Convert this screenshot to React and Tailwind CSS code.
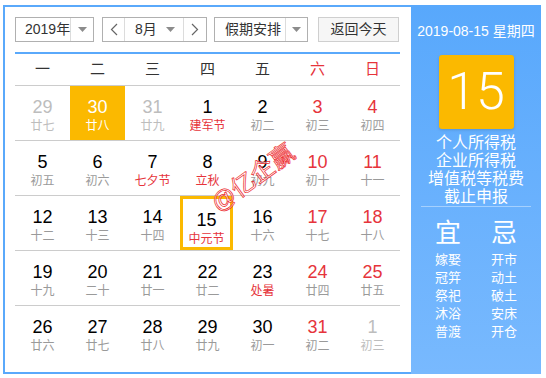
import React from 'react';

const font = { fontFamily: '"Liberation Sans", "Noto Sans CJK SC", sans-serif' };

const weeks = [
  [
    { d: 29, l: '廿七', o: true },
    { d: 30, l: '廿八', o: true, hl: true },
    { d: 31, l: '廿九', o: true },
    { d: 1, l: '建军节', f: true },
    { d: 2, l: '初二' },
    { d: 3, l: '初三', w: true },
    { d: 4, l: '初四', w: true },
  ],
  [
    { d: 5, l: '初五' },
    { d: 6, l: '初六' },
    { d: 7, l: '七夕节', f: true },
    { d: 8, l: '立秋', f: true },
    { d: 9, l: '初九' },
    { d: 10, l: '初十', w: true },
    { d: 11, l: '十一', w: true },
  ],
  [
    { d: 12, l: '十二' },
    { d: 13, l: '十三' },
    { d: 14, l: '十四' },
    { d: 15, l: '中元节', f: true, today: true },
    { d: 16, l: '十六' },
    { d: 17, l: '十七', w: true },
    { d: 18, l: '十八', w: true },
  ],
  [
    { d: 19, l: '十九' },
    { d: 20, l: '二十' },
    { d: 21, l: '廿一' },
    { d: 22, l: '廿二' },
    { d: 23, l: '处暑', f: true },
    { d: 24, l: '廿四', w: true },
    { d: 25, l: '廿五', w: true },
  ],
  [
    { d: 26, l: '廿六' },
    { d: 27, l: '廿七' },
    { d: 28, l: '廿八' },
    { d: 29, l: '廿九' },
    { d: 30, l: '初一' },
    { d: 31, l: '初二', w: true },
    { d: 1, l: '初三', o: true },
  ],
];

const Caret = () => (
  <svg width="9" height="5" viewBox="0 0 9 5">
    <path d="M0 0 H9 L4.5 5 Z" fill="#8c8c8c" />
  </svg>
);

const Chevron = ({ dir }) => (
  <svg width="8" height="13" viewBox="0 0 8 13">
    <polyline
      points={dir === 'l' ? '7,1 1.5,6.5 7,12' : '1,1 6.5,6.5 1,12'}
      fill="none"
      stroke="#666"
      strokeWidth="1.2"
    />
  </svg>
);

const Cell = ({ c }) => {
  let num = 'text-black';
  let lun = 'text-[#9a9a9a]';
  if (c.w) num = 'text-[#e6343b]';
  if (c.f) lun = 'text-[#e6343b]';
  if (c.o) {
    num = 'text-[#bdbdbd]';
    lun = 'text-[#bdbdbd]';
  }
  let box = 'h-[54px] flex flex-col items-center pt-[11px]';
  if (c.hl) {
    box += ' bg-[#fbb900]';
    num = 'text-white';
    lun = 'text-white';
  }
  if (c.today) box += ' border-[3px] border-[#fbb900] pt-[8px] mr-[2px]';
  return (
    <div className={box}>
      <div className={`text-[18px] leading-[20px] ${num}`}>{c.d}</div>
      <div className={`text-[12px] leading-[16px] mt-[1px] ${lun}`}>{c.l}</div>
    </div>
  );
};

export default function App() {
  return (
    <div className="w-[546px] h-[378px] bg-white pt-[5px] pl-[3px]" style={font}>
      <div className="flex h-[369px]">
        <div className="relative w-[408px] border-l-2 border-y-2 border-[#5aa9fb] pl-[10px] pr-[11px] pt-[10px]">
          <div className="flex items-center h-[25px] text-[14px] text-[#333]">
            <div className="flex h-[25px] w-[79px] border border-[#b0b0b0]">
              <div className="w-[55px] pl-[9px] leading-[23px] whitespace-nowrap border-r border-[#dcdcdc]">2019年</div>
              <div className="flex-1 flex items-center justify-center"><Caret /></div>
            </div>
            <div className="flex h-[25px] w-[105px] ml-[8px] border border-[#b0b0b0]">
              <div className="w-[22px] flex items-center justify-center border-r border-[#dcdcdc]"><Chevron dir="l" /></div>
              <div className="w-[59px] flex items-center border-r border-[#dcdcdc]">
                <span className="pl-[10px] leading-[23px]">8月</span>
                <span className="ml-auto mr-[8px] flex"><Caret /></span>
              </div>
              <div className="flex-1 flex items-center justify-center"><Chevron dir="r" /></div>
            </div>
            <div className="flex h-[25px] w-[94px] ml-[7px] border border-[#b0b0b0]">
              <div className="w-[71px] pl-[10px] leading-[23px] whitespace-nowrap border-r border-[#dcdcdc]">假期安排</div>
              <div className="flex-1 flex items-center justify-center"><Caret /></div>
            </div>
            <div className="h-[25px] w-[81px] ml-[10px] border border-[#cfcfcf] bg-[#f6f6f6] text-center leading-[23px]">返回今天</div>
          </div>

          <div className="mt-[10px] border-t-2 border-[#5aa9fb] grid grid-cols-7 h-[34px] border-b border-b-[#cccccc] items-center text-[15px] text-[#333] text-center">
            {['一', '二', '三', '四', '五', '六', '日'].map((d, i) => (
              <div key={d} className={i > 4 ? 'text-[#e6343b]' : ''}>{d}</div>
            ))}
          </div>

          {weeks.map((wk, i) => (
            <div key={i} className={`grid grid-cols-7 ${i < 4 ? 'border-b border-[#cccccc]' : ''}`}>
              {wk.map((c, j) => (
                <Cell key={j} c={c} />
              ))}
            </div>
          ))}

          <div className="absolute left-[248px] top-[171px] -translate-x-1/2 -translate-y-1/2 rotate-[-36deg] text-[24px] leading-none whitespace-nowrap text-white/60 [-webkit-text-stroke:0.7px_#ec1f2a]">
            @亿企赢
          </div>
        </div>

        <div className="w-[130px] bg-gradient-to-b from-[#58a8fc] to-[#78b9fe] text-white flex flex-col items-center pt-[16px]">
          <div className="text-[14px] leading-[20px] whitespace-nowrap">2019-08-15 星期四</div>
          <div className="mt-[14px] w-[75px] h-[74px] rounded-[3px] bg-[#fbb900] shadow-[0_1px_3px_rgba(0,0,0,0.15)] flex items-center justify-center text-[52px] leading-none" style={{ fontFamily: 'Roboto, "Liberation Sans", sans-serif', fontWeight: 300 }}>
            15
          </div>
          <div className="mt-[5px] text-[16px] leading-[18px] text-center">
            <div>个人所得税</div>
            <div>企业所得税</div>
            <div>增值税等税费</div>
            <div>截止申报</div>
          </div>
          <div className="w-[110px] h-[1px] bg-white/40" />
          <div className="mt-[11px] grid grid-cols-2 w-[112px] text-center">
            <div className="text-[26px] leading-[30px]">宜</div>
            <div className="text-[26px] leading-[30px]">忌</div>
            <div className="mt-[3px] text-[13px] leading-[18px]">
              <div>嫁娶</div>
              <div>冠笄</div>
              <div>祭祀</div>
              <div>沐浴</div>
              <div>普渡</div>
            </div>
            <div className="mt-[3px] text-[13px] leading-[18px]">
              <div>开市</div>
              <div>动土</div>
              <div>破土</div>
              <div>安床</div>
              <div>开仓</div>
            </div>
          </div>
        </div>
      </div>
    </div>
  );
}
